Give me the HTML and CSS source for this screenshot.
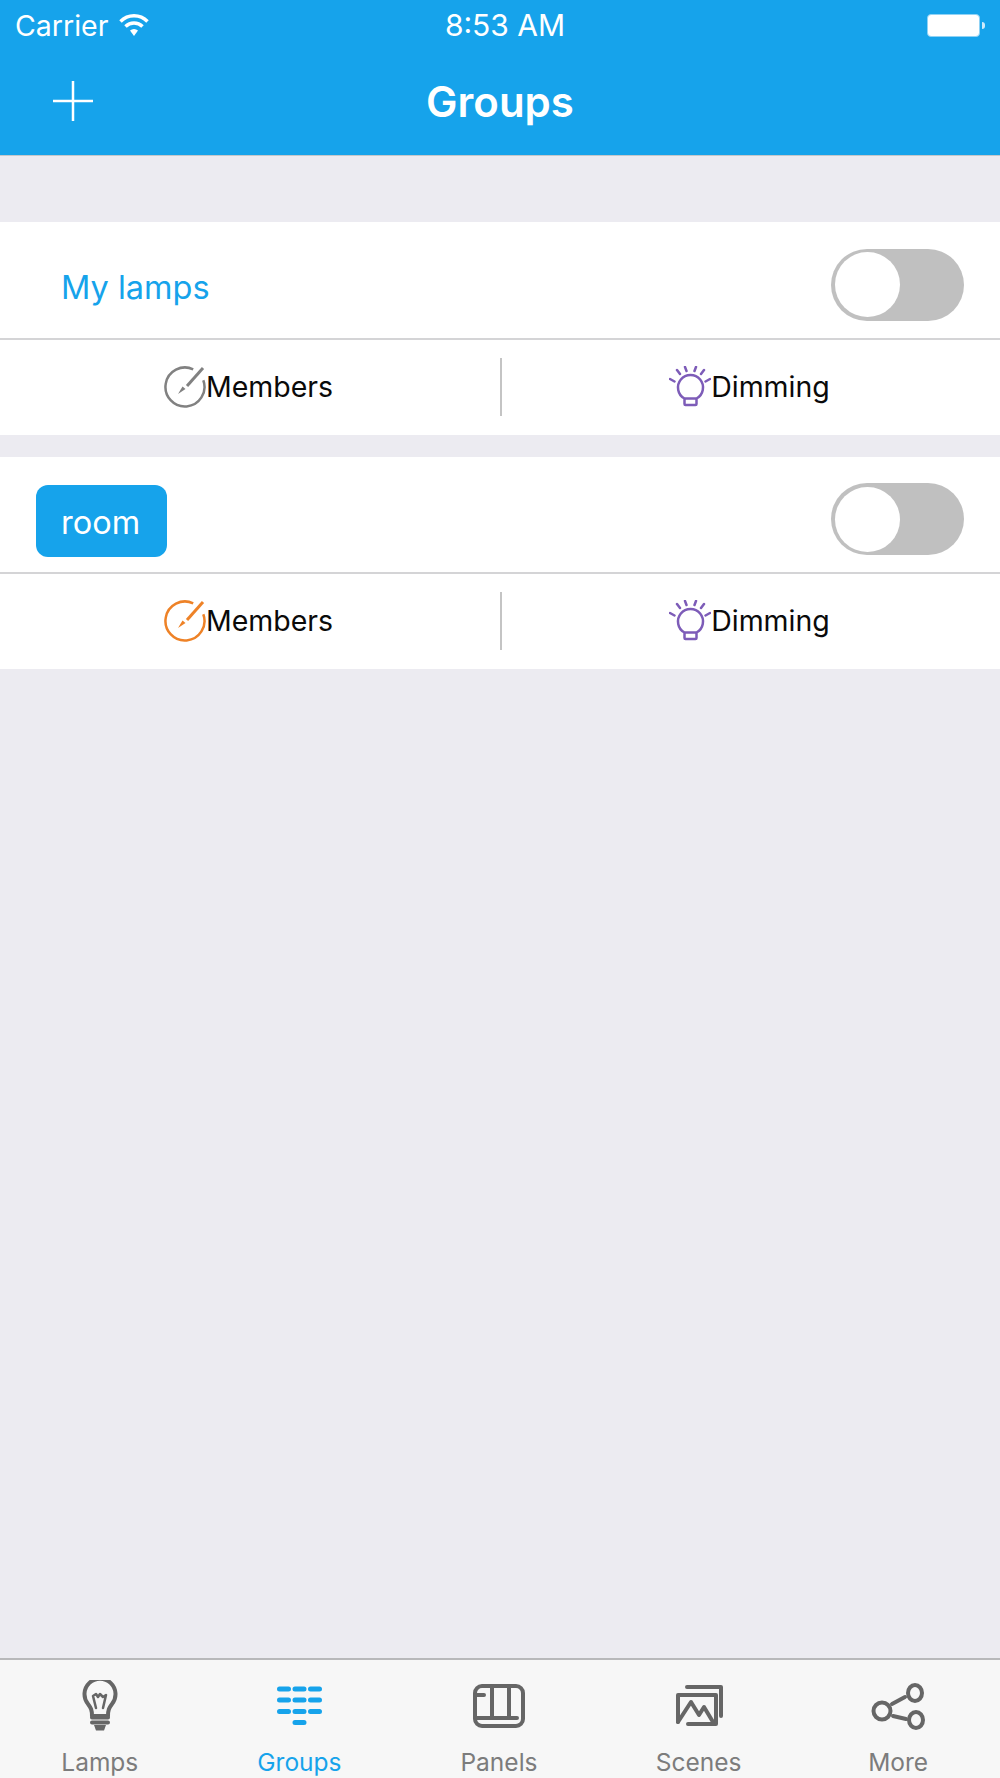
FILE: index.html
```html
<!DOCTYPE html>
<html>
<head>
  <title>Groups</title>
  <link rel="stylesheet" href="styles.css">
</head>
<body>
  <div class="app">
    <header class="header">
      <div class="status-bar">
        <div class="status-left">
          <span>Carrier</span>
          <svg class="wifi" width="30" height="22" viewBox="0 0 30 22">
            <path d="M1.500 7.500a19 19 0 0 1 27 0" />
            <path d="M6.500 12.500a12 12 0 0 1 17 0" />
            <path class="wifi-dot" d="M11 16.500a6 6 0 0 1 8 0l-4 5.500z" />
          </svg>
        </div>
        <div class="status-time">8:53 AM</div>
        <div class="status-right">
          <div class="battery"></div>
          <div class="battery-nub"></div>
        </div>
      </div>
      <div class="nav-bar">
        <svg class="add-icon" width="40" height="40" viewBox="0 0 40 40">
          <path d="M20 0v40M0 20h40" />
        </svg>
        <h1 class="title">Groups</h1>
      </div>
    </header>

    <main class="content">
      <section class="group">
        <div class="group-head">
          <div class="group-name">My lamps</div>
          <div class="toggle"><div class="knob"></div></div>
        </div>
        <div class="group-actions">
          <div class="action">
            <svg class="action-icon members-off" width="42" height="42" viewBox="0 0 42 42">
              <path class="ring" d="M29.200 3.300A19.500 19.500 0 1 0 39.300 14.300" />
              <path class="pen" d="M39 2L23 20" />
              <path class="pen-tip" d="M18.500 20.500l3 2.500-7.500 5z" />
            </svg>
            <span>Members</span>
          </div>
          <div class="divider"></div>
          <div class="action">
            <svg class="action-icon bulb" width="42" height="42" viewBox="0 0 42 42">
              <path d="M16 1l1.500 4M27 1l-1.500 4M8 4l3 4M35 4l-3 4M1 13l4.500 2.500M41 13l-4.500 2.500" />
              <path d="M15.500 32.500a12.500 12.500 0 1 1 12 0V38a1 1 0 0 1-1 1h-10a1 1 0 0 1-1-1zM15.500 32.500h12" />
            </svg>
            <span>Dimming</span>
          </div>
        </div>
      </section>

      <section class="group">
        <div class="group-head">
          <div class="group-name selected">room</div>
          <div class="toggle"><div class="knob"></div></div>
        </div>
        <div class="group-actions">
          <div class="action">
            <svg class="action-icon members-on" width="42" height="42" viewBox="0 0 42 42">
              <path class="ring" d="M29.200 3.300A19.500 19.500 0 1 0 39.300 14.300" />
              <path class="pen" d="M39 2L23 20" />
              <path class="pen-tip" d="M18.500 20.500l3 2.500-7.500 5z" />
            </svg>
            <span>Members</span>
          </div>
          <div class="divider"></div>
          <div class="action">
            <svg class="action-icon bulb" width="42" height="42" viewBox="0 0 42 42">
              <path d="M16 1l1.500 4M27 1l-1.500 4M8 4l3 4M35 4l-3 4M1 13l4.500 2.500M41 13l-4.500 2.500" />
              <path d="M15.500 32.500a12.500 12.500 0 1 1 12 0V38a1 1 0 0 1-1 1h-10a1 1 0 0 1-1-1zM15.500 32.500h12" />
            </svg>
            <span>Dimming</span>
          </div>
        </div>
      </section>
    </main>

    <nav class="tab-bar">
      <div class="tab">
        <div class="tab-icon">
          <svg class="line-icon" width="36" height="51" viewBox="0 0 36 51">
            <path d="M10 36c0-6-1-8-4-12a15.500 15.500 0 1 1 24 0c-3 4-4 6-4 12z" />
            <path class="thin" d="M14 28l-3-12 3-2 2 3 2-3 3 3 3-2-3 13" />
            <path d="M10 37.500h16M10 42.500h16" />
            <path class="fill" d="M12 45h12l-2 5.500h-8z" />
          </svg>
        </div>
        <span>Lamps</span>
      </div>
      <div class="tab active">
        <div class="tab-icon">
          <svg class="dash-icon" width="45" height="39" viewBox="0 0 45 39">
            <path d="M2.500 3h9M18 3h9M33.500 3h9M2.500 14h9M18 14h9M33.500 14h9M2.500 25.500h9M18 25.500h9M33.500 25.500h9M18 36.500h9" />
          </svg>
        </div>
        <span>Groups</span>
      </div>
      <div class="tab">
        <div class="tab-icon">
          <svg class="line-icon" width="52" height="44" viewBox="0 0 52 44">
            <rect x="2" y="2" width="48" height="40" rx="7" />
            <path d="M3 11h8M19 2v32M36 2v32M3 34h41" />
          </svg>
        </div>
        <span>Panels</span>
      </div>
      <div class="tab">
        <div class="tab-icon">
          <svg class="line-icon" width="50" height="42" viewBox="0 0 50 42">
            <path d="M13 2h34v29" />
            <path d="M4 37V10h38v29H14" />
            <path d="M4 37l13-20 8 13 5-8 9 15" />
          </svg>
        </div>
        <span>Scenes</span>
      </div>
      <div class="tab">
        <div class="tab-icon">
          <svg class="line-icon" width="57" height="48" viewBox="0 0 57 48">
            <ellipse cx="12" cy="29" rx="8.500" ry="8.500" />
            <ellipse cx="45" cy="11" rx="7" ry="8" />
            <ellipse cx="46" cy="38" rx="7" ry="8" />
            <path d="M22 22l13-7M23 34l13 3" />
          </svg>
        </div>
        <span>More</span>
      </div>
    </nav>
  </div>
</body>
</html>
```

FILE: styles.css
```css
* {
  box-sizing: border-box;
}

body {
  margin: 0;
  font-family: Inter, "Noto Sans", sans-serif;
  background-color: #ecebf1;
}

.app {
  display: flex;
  flex-direction: column;
  height: 1778px;
}

/* top blue area */
.header {
  height: 156px;
  flex-shrink: 0;
  background-color: #16a3eb;
  border-bottom: 1px solid #c4c8cc;
  color: #fff;
}

.status-bar {
  display: grid;
  grid-template-columns: 1fr auto 1fr;
  align-items: center;
  height: 50px;
  padding: 0 15px;
  font-size: 28.500px;
}

.status-left {
  display: flex;
  align-items: center;
  gap: 11px;
}

.wifi {
  fill: none;
  stroke: #fff;
  stroke-width: 3.500;
}

.wifi-dot {
  fill: #fff;
  stroke: none;
}

.status-time {
  margin-left: 10px;
  font-size: 30px;
}

.status-right {
  display: flex;
  align-items: center;
  justify-content: flex-end;
}

.battery {
  width: 53px;
  height: 23px;
  background-color: #fff;
  border: 1px solid #8fd2f5;
  border-radius: 4px;
}

.battery-nub {
  width: 3px;
  height: 7px;
  margin-left: 2px;
  background-color: #cfeafa;
  border-radius: 0 3px 3px 0;
}

.nav-bar {
  display: grid;
  grid-template-columns: 1fr auto 1fr;
  align-items: center;
  height: 102px;
  padding: 0 53px;
}

.add-icon {
  fill: none;
  stroke: #fff;
  stroke-width: 2.500;
}

.title {
  margin: 0;
  font-size: 42px;
  font-weight: 600;
}

/* group list */
.content {
  flex: 1;
  padding-top: 66px;
}

.group {
  margin-bottom: 22px;
  background-color: #fff;
}

.group-head {
  display: flex;
  align-items: center;
  justify-content: space-between;
  height: 118px;
  padding: 9px 36px 0;
  border-bottom: 2px solid #d4d4d6;
}

.group + .group .group-head {
  height: 117px;
}

.group-name {
  display: flex;
  align-items: center;
  height: 72px;
  margin-top: 4px;
  padding: 2px 27px 0 25px;
  border-radius: 12px;
  font-size: 32.500px;
  color: #16a3eb;
}

.group-name.selected {
  background-color: #16a3eb;
  color: #fff;
}

.toggle {
  display: flex;
  align-items: center;
  width: 133px;
  height: 72px;
  padding: 0 3.500px;
  background-color: #c0c0c0;
  border-radius: 36px;
}

.knob {
  width: 65px;
  height: 65px;
  background-color: #fff;
  border-radius: 50%;
}

.group-actions {
  display: grid;
  grid-template-columns: 500px 2px 1fr;
  align-items: center;
  height: 95px;
  padding-bottom: 2px;
}

.action {
  display: flex;
  align-items: center;
  justify-content: center;
  padding-right: 3px;
  font-size: 28.500px;
  color: #0a0a0a;
}

.action-icon {
  fill: none;
  stroke-width: 2.500;
}

.divider {
  height: 58px;
  background-color: #c4c4c4;
}

.members-off {
  color: #818181;
}

.members-on {
  color: #ee8227;
}

.ring {
  stroke: currentColor;
}

.pen {
  stroke: currentColor;
  stroke-width: 3;
}

.pen-tip {
  fill: currentColor;
  stroke: none;
}

.bulb {
  stroke: #7d5cb8;
  stroke-linecap: round;
}

/* bottom tabs */
.tab-bar {
  display: flex;
  height: 120px;
  flex-shrink: 0;
  padding-right: 2px;
  background-color: #f7f7f7;
  border-top: 2px solid #b8b8ba;
}

.tab {
  flex: 1;
  display: flex;
  flex-direction: column;
  align-items: center;
  font-size: 24.500px;
  color: #7c7c7c;
}

.tab.active {
  color: #16a3eb;
}

.tab-icon {
  display: flex;
  align-items: center;
  justify-content: center;
  height: 87px;
  padding-top: 4px;
}

.line-icon {
  fill: none;
  stroke: #666;
  stroke-width: 4;
  stroke-linecap: round;
  stroke-linejoin: round;
}

.line-icon .thin {
  stroke-width: 2.500;
}

.line-icon .fill {
  fill: #666;
  stroke: none;
}

.dash-icon {
  fill: none;
  stroke: #16a3eb;
  stroke-width: 5;
  stroke-linecap: round;
}
```
